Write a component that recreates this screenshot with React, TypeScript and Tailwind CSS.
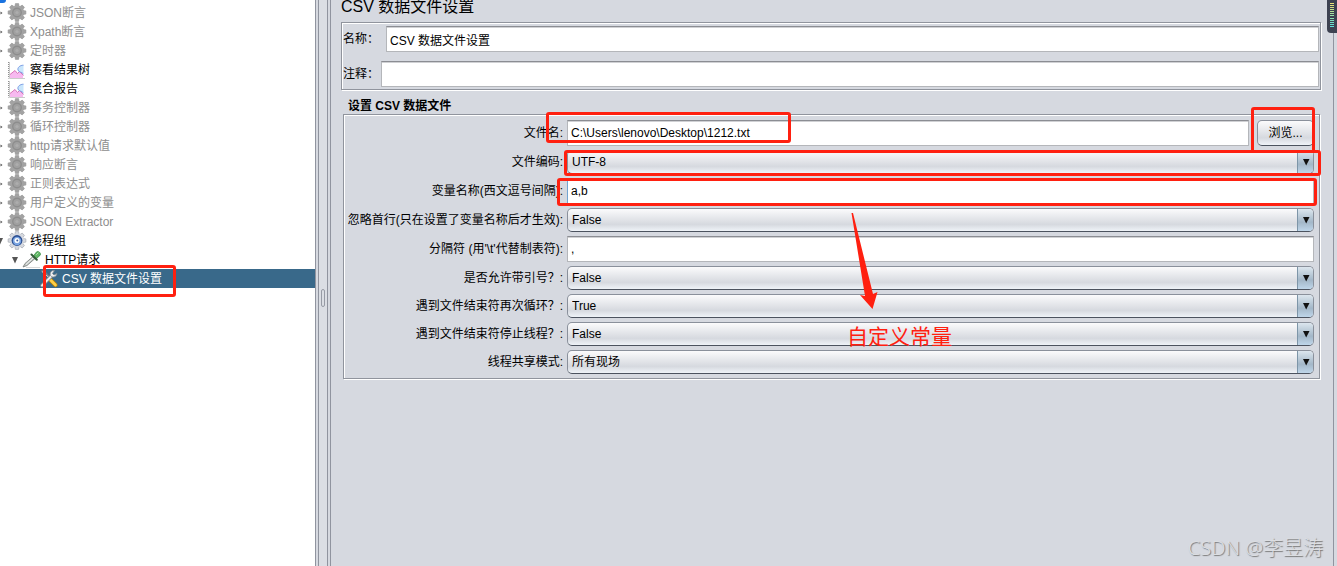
import type { ReactNode } from "react";
import { clsx } from "clsx";

type IconName = "gear" | "chart" | "threads" | "dropper" | "tools";

interface TreeNode {
  label: string;
  icon: IconName;
  depth: number;
  disabled?: boolean;
  selected?: boolean;
  handle?: "open" | "closed";
}

const nodes: TreeNode[] = [
  { label: "JSON断言", icon: "gear", depth: 0, disabled: true, handle: "closed" },
  { label: "Xpath断言", icon: "gear", depth: 0, disabled: true, handle: "closed" },
  { label: "定时器", icon: "gear", depth: 0, disabled: true, handle: "closed" },
  { label: "察看结果树", icon: "chart", depth: 0 },
  { label: "聚合报告", icon: "chart", depth: 0 },
  { label: "事务控制器", icon: "gear", depth: 0, disabled: true, handle: "closed" },
  { label: "循环控制器", icon: "gear", depth: 0, disabled: true, handle: "closed" },
  { label: "http请求默认值", icon: "gear", depth: 0, disabled: true, handle: "closed" },
  { label: "响应断言", icon: "gear", depth: 0, disabled: true, handle: "closed" },
  { label: "正则表达式", icon: "gear", depth: 0, disabled: true, handle: "closed" },
  { label: "用户定义的变量", icon: "gear", depth: 0, disabled: true, handle: "closed" },
  { label: "JSON Extractor", icon: "gear", depth: 0, disabled: true, handle: "closed" },
  { label: "线程组", icon: "threads", depth: 0, handle: "open" },
  { label: "HTTP请求", icon: "dropper", depth: 1, handle: "open" },
  { label: "CSV 数据文件设置", icon: "tools", depth: 2, selected: true },
];

const teeth = [0, 45, 90, 135, 180, 225, 270, 315];

function Gear({ active }: { active?: boolean }) {
  const body = active ? "#d6d9df" : "#a3a3a3";
  const edge = active ? "#9da2ab" : "#979797";
  return (
    <svg width="20" height="19" viewBox="0 0 20 19" className="shrink-0">
      {teeth.map((a) => (
        <path
          key={a}
          d="M7.9 3.5L8.4 0.6H11.6L12.1 3.5Z"
          fill={body}
          stroke={edge}
          strokeWidth="0.6"
          transform={`rotate(${a} 10 9.5)`}
        />
      ))}
      <circle cx="10" cy="9.5" r="7" fill={body} />
      {active ? (
        <>
          <circle cx="10" cy="9.5" r="5.4" fill="#2c4f91" />
          <circle cx="10" cy="10" r="4.2" fill="#79a4e2" />
          <circle cx="10" cy="9.5" r="2.5" fill="#fff" />
          <circle cx="10.3" cy="9.5" r="1" fill="#3d5f9e" />
        </>
      ) : (
        <>
          <circle cx="10" cy="9.5" r="4.9" fill="#8d8d8d" />
          <circle cx="10" cy="9.5" r="3.6" fill="#a0a0a0" />
          <circle cx="10" cy="9.5" r="1.6" fill="#adadad" />
        </>
      )}
    </svg>
  );
}

function NodeIcon({ name }: { name: IconName }) {
  if (name === "gear") return <Gear />;
  if (name === "threads") return <Gear active />;
  if (name === "chart") {
    return (
      <svg width="20" height="19" viewBox="0 0 20 19" className="shrink-0">
        <path d="M3 14.5L8 10.5L10.5 13.5L12.5 11.5L16 15V18H3Z" fill="#f7b9f0" />
        <path d="M3 14.5L8 10.5L10.5 13.5L12.5 11.5L16.5 15.5" fill="none" stroke="#d774b8" />
        <path d="M16.5 5C13 5 10.5 7.5 11 10C11.5 12.5 14.5 11.5 16.5 14Z" fill="#c9e6fb" />
        <path d="M16.5 5.2C13 5.2 10.3 7.5 11 10C11.7 12.5 14.5 11.5 16.5 14" fill="none" stroke="#7f9fe6" />
        <path d="M1.5 2V18.5" stroke="#8f8f8f" strokeDasharray="1 1" />
        <path d="M2.5 2V18.5H18" fill="none" stroke="#bdbdbd" strokeWidth="0.8" />
      </svg>
    );
  }
  if (name === "dropper") {
    return (
      <svg width="20" height="19" viewBox="0 0 20 19" className="shrink-0">
        <path d="M4 17.5H18" stroke="#d8d8d8" />
        <path d="M1 17L3 13.5L11 6.5L13 8.5L5 15.5Z" fill="#c3c8c5" stroke="#777c7a" strokeWidth="0.8" />
        <path d="M4 14.5L11 8" stroke="#f2f4f3" />
        <path d="M11 6.5L14.5 2C16 0.5 19.5 3 18.2 5.2L14 9Z" fill="#62b866" stroke="#3b8d47" strokeWidth="0.8" />
        <path d="M9.5 4.5L14.8 9.8" stroke="#355e3a" strokeWidth="2" strokeLinecap="round" />
        <path d="M14.5 4.5L16 3" stroke="#b5e5b2" strokeLinecap="round" />
      </svg>
    );
  }
  return (
    <svg width="20" height="19" viewBox="0 0 20 19" className="shrink-0">
      <path d="M2.5 3L4 1.5L11 9" fill="none" stroke="#6f7d88" strokeWidth="2.2" />
      <path d="M3 2.5L11 9.5" stroke="#d0d5d9" />
      <path d="M11 10.5L16.5 16" stroke="#b98300" strokeWidth="4.2" strokeLinecap="round" />
      <path d="M11 10.5L16.5 16" stroke="#ffd04a" strokeWidth="2.6" strokeLinecap="round" />
      <path d="M3 16.5L13 6.5" stroke="#7e868d" strokeWidth="3.6" strokeLinecap="round" />
      <path d="M3 16.5L13 6.5" stroke="#eceef0" strokeWidth="2" strokeLinecap="round" />
      <path
        d="M15.5 1.5C12 1 10.5 4 11.5 6.5C13 9 17.5 8.5 18 4.5L15 6L13.5 4.5Z"
        fill="#eceef0"
        stroke="#7e868d"
        strokeWidth="0.8"
      />
    </svg>
  );
}

function Handle({ state }: { state?: "open" | "closed" }) {
  return (
    <svg width="8" height="8" viewBox="0 0 8 8" className="shrink-0">
      {state === "open" && <path d="M1 1H7L4 7.5Z" fill="#555" />}
      {state === "closed" && <path d="M4.5 2.5L6.5 4L4.5 5.5Z" fill="#555" />}
    </svg>
  );
}

function Highlight({ className }: { className: string }) {
  return (
    <span
      aria-hidden="true"
      className={clsx("pointer-events-none absolute z-10 rounded-[3px] border-[3px] border-[#ff2010]", className)}
    />
  );
}

function TreeRow({ node }: { node: TreeNode }) {
  return (
    <li
      role="treeitem"
      aria-selected={!!node.selected}
      aria-disabled={node.disabled}
      className={clsx(
        "relative flex h-[19px] items-center whitespace-nowrap",
        node.disabled && "text-[#8e8e8e]",
        node.selected && "bg-[#39698a] text-white",
      )}
    >
      <span
        className={clsx(
          "flex items-center gap-[3px]",
          node.depth === 0 && "-ml-1",
          node.depth === 1 && "ml-[11px]",
          node.depth === 2 && "ml-[28px]",
        )}
      >
        <Handle state={node.handle} />
        <NodeIcon name={node.icon} />
        <span>{node.label}</span>
      </span>
      {node.selected && <Highlight className="-top-1 left-[43px] h-8 w-[133px]" />}
    </li>
  );
}

const inputClass =
  "block h-[26px] w-full min-w-0 border border-[#b4b6ba] border-t-[#8b8d93] bg-white px-[3px] shadow-[inset_0_1px_0_#d0d1d4] outline-none";

interface ComboProps {
  id: string;
  value: string;
  options: string[];
}

function Combo({ id, value, options }: ComboProps) {
  return (
    <div className="relative flex h-6 overflow-hidden rounded-[5px] border border-[#8a909b] border-b-[#4c535f] bg-linear-to-b from-[#fbfbfc] via-[#d6d9df] via-70% to-[#eff3f8]">
      <select
        id={id}
        defaultValue={value}
        className="h-full w-full appearance-none bg-transparent pr-5 pl-1 outline-none"
      >
        {options.map((o) => (
          <option key={o}>{o}</option>
        ))}
      </select>
      <span className="pointer-events-none absolute inset-y-0 right-0 flex w-4 items-center justify-center border-l border-[#7d95a8] bg-linear-to-b from-[#dce6ee] via-[#a3b7c8] via-60% to-[#bfd6ea]">
        <svg width="8" height="8" viewBox="0 0 8 8">
          <path d="M1 1H7.5L4.2 7.5Z" fill="#111" />
        </svg>
      </span>
    </div>
  );
}

function Field({ id, label, children }: { id: string; label: string; children: ReactNode }) {
  return (
    <div className="flex items-center gap-1">
      <label htmlFor={id} className="w-[219px] shrink-0 text-right whitespace-nowrap">
        {label}
      </label>
      <div className="relative min-w-0 flex-1">{children}</div>
    </div>
  );
}

function Annotation() {
  return (
    <>
      <svg
        width="30"
        height="100"
        viewBox="0 0 30 100"
        className="pointer-events-none absolute top-[34px] left-[283px] z-10"
      >
        <path d="M1.5 1L3 1L23 82L27.5 80L22.5 97L10 83L15 84Z" fill="#ff2010" />
      </svg>
      <span className="pointer-events-none absolute top-[147px] left-[280px] z-10 text-[21px] leading-6 whitespace-nowrap text-[#ff2010]">
        自定义常量
      </span>
    </>
  );
}

const bools = ["True", "False"];

const etched =
  "border border-[#90949d] shadow-[1px_1px_0_#fff,inset_1px_1px_0_#fff]";

export default function App() {
  return (
    <div className="relative flex min-h-screen bg-[#d6d9e0] font-['Liberation_Sans','Noto_Sans_CJK_SC',sans-serif] text-[12px] leading-4 text-black">
      <aside className="relative w-[315px] shrink-0 overflow-x-clip bg-white pt-[3px]">
        <span className="absolute top-0 left-0 h-[3px] w-1.5 rounded-br-full bg-[#1a73e0]" />
        <ul role="tree">
          {nodes.map((node) => (
            <TreeRow key={node.label} node={node} />
          ))}
        </ul>
      </aside>

      <div className="flex shrink-0">
        <div className="w-1 border-x border-[#90949f]" />
        <div className="relative w-2 bg-[#dbdee4]">
          <span className="absolute top-[289px] left-[2px] h-[18px] w-1 rounded-sm border border-[#979ba5]" />
        </div>
        <div className="w-1 border-x border-[#90949f]" />
      </div>

      <main className="mr-[3px] min-w-0 flex-1 border-r border-[#90949f] pr-3 pl-[10px]">
        <h1 className="-mt-px mb-[7px] text-[16px] leading-4">CSV 数据文件设置</h1>

        <section className={clsx("flex flex-col gap-[9px] pt-[3px] pr-px pb-[2px]", etched)}>
          <div className="flex items-center">
            <label htmlFor="name" className="w-11 shrink-0 pl-px">名称：</label>
            <input id="name" className={inputClass} defaultValue="CSV 数据文件设置" />
          </div>
          <div className="flex items-center">
            <label htmlFor="comment" className="w-[39px] shrink-0 pl-px">注释：</label>
            <input id="comment" className={inputClass} />
          </div>
        </section>

        <h2 className="mt-2 ml-[7px] font-bold">设置 CSV 数据文件</h2>

        <form className={clsx("mr-px ml-[2px] flex flex-col gap-1 pt-[5px] pr-[5px] pb-1", etched)}>
          <Field id="filename" label="文件名:">
            <div className="flex gap-2">
              <input id="filename" className={inputClass} defaultValue="C:\Users\lenovo\Desktop\1212.txt" />
              <div className="relative shrink-0">
                <button
                  type="button"
                  className="h-[26px] w-[57px] rounded-[5px] border border-[#8a909b] border-b-[#4c535f] bg-linear-to-b from-[#fbfbfc] via-[#d6d9df] via-70% to-[#eff3f8]"
                >
                  浏览...
                </button>
                <Highlight className="-top-[13px] -left-[6px] h-[46px] w-16" />
              </div>
            </div>
            <Highlight className="-top-2 -left-[21px] h-[31px] w-[245px]" />
          </Field>
          <Field id="encoding" label="文件编码:">
            <Combo id="encoding" value="UTF-8" options={["UTF-8", "UTF-16", "ISO-8859-15", "US-ASCII"]} />
            <Highlight className="top-0 -right-[7px] -bottom-[2px] -left-[3px]" />
          </Field>
          <Field id="variables" label="变量名称(西文逗号间隔):">
            <input id="variables" className={clsx(inputClass, "border-l-[#73a4d1]")} defaultValue="a,b" />
            <Highlight className="top-0 -right-[3px] -bottom-[2px] -left-[10px]" />
            <Annotation />
          </Field>
          <Field id="ignoreFirst" label="忽略首行(只在设置了变量名称后才生效):">
            <Combo id="ignoreFirst" value="False" options={bools} />
          </Field>
          <Field id="delimiter" label="分隔符 (用'\t'代替制表符):">
            <input id="delimiter" className={inputClass} defaultValue="," />
          </Field>
          <Field id="quoted" label="是否允许带引号？:">
            <Combo id="quoted" value="False" options={bools} />
          </Field>
          <Field id="recycle" label="遇到文件结束符再次循环？:">
            <Combo id="recycle" value="True" options={bools} />
          </Field>
          <Field id="stopThread" label="遇到文件结束符停止线程？:">
            <Combo id="stopThread" value="False" options={bools} />
          </Field>
          <Field id="shareMode" label="线程共享模式:">
            <Combo id="shareMode" value="所有现场" options={["所有现场", "当前线程组", "当前线程"]} />
          </Field>
        </form>
      </main>

      {/* edge of the floating meter that hangs over the window */}
      <div className="absolute top-0 right-0 flex h-[33px] w-[10px] flex-col items-center rounded-bl-[4px] bg-[#3d4251] pt-[3px]">
        <span className="flex h-6 w-1 flex-col justify-between">
          <span className="h-px bg-[#e8e27a]" />
          <span className="h-px bg-[#dfe27e]" />
          <span className="h-px bg-[#d2e184]" />
          <span className="h-px bg-[#c4e08c]" />
          <span className="h-px bg-[#b4e096]" />
          <span className="h-px bg-[#a6e0a0]" />
          <span className="h-px bg-[#98e0aa]" />
          <span className="h-px bg-[#8ae0b4]" />
          <span className="h-px bg-[#7ce0be]" />
          <span className="h-px bg-[#70e0c8]" />
          <span className="h-px bg-[#66e0d0]" />
          <span className="h-px bg-[#5fe0d8]" />
        </span>
      </div>

      <span className="pointer-events-none absolute right-[14px] bottom-[6px] font-['Noto_Sans','Noto_Sans_CJK_SC',sans-serif] text-[20px] leading-6 font-light text-[#dcdee2] [text-shadow:1px_1px_1px_#777]">
        CSDN @李昱涛
      </span>
    </div>
  );
}
